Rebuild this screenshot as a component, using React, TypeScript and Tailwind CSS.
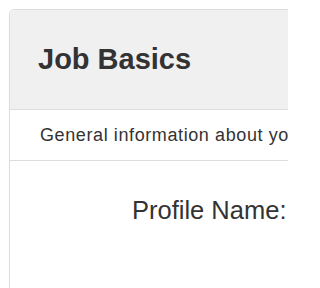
import React from 'react';

const App = () => {
  return (
    <div className="w-[288px] h-[288px] overflow-hidden bg-white" style={{ fontFamily: '"Liberation Sans", Arial, sans-serif' }}>
      <div className="ml-[9px] mt-[9px] w-[420px] h-[340px] rounded-[5px] border border-[#dddddd] shadow-[0_1px_1px_rgba(0,0,0,0.05)] text-[#333333]">
        {/* Heading */}
        <div className="h-[100px] flex items-center px-[28px] bg-[#f0f0f0] border-b border-[#dddddd] rounded-t-[5px]">
          <h3 className="text-[29px] font-bold leading-none">Job Basics</h3>
        </div>
        {/* Description */}
        <div className="h-[51px] flex items-center pl-[30px] border-b border-[#dddddd]">
          <p className="text-[18px] tracking-[0.6px] leading-none whitespace-nowrap">General information about your job</p>
        </div>
        {/* Body */}
        <div className="pt-[37px] pl-[122px]">
          <label className="text-[25.5px] leading-none whitespace-nowrap">Profile Name:</label>
        </div>
      </div>
    </div>
  );
};

export default App;
